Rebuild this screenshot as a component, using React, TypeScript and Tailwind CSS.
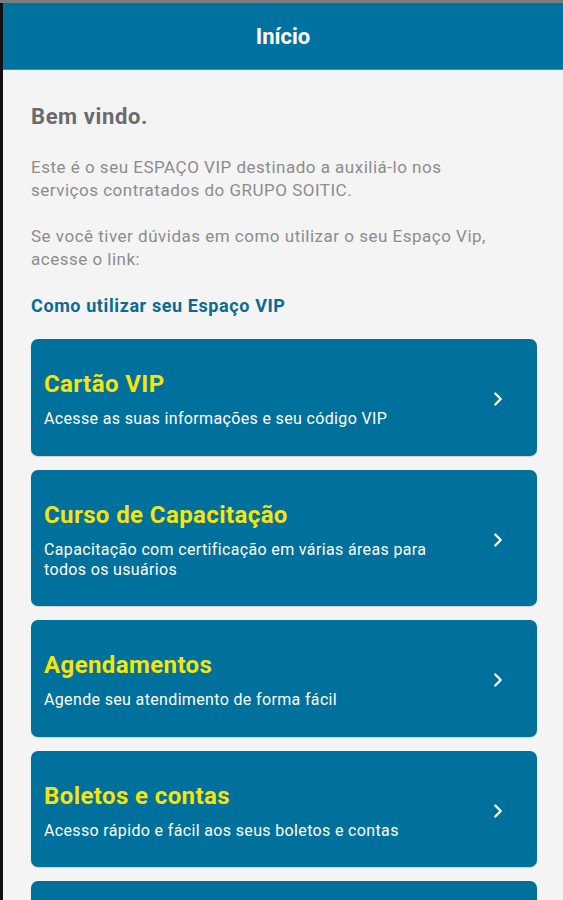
import { ChevronRight } from "lucide-react"

interface MenuCard {
  title: string
  description: string
}

const cards: MenuCard[] = [
  { title: "Cartão VIP", description: "Acesse as suas informações e seu código VIP" },
  {
    title: "Curso de Capacitação",
    description: "Capacitação com certificação em várias áreas para todos os usuários",
  },
  { title: "Agendamentos", description: "Agende seu atendimento de forma fácil" },
  { title: "Boletos e contas", description: "Acesso rápido e fácil aos seus boletos e contas" },
  { title: "Rede de parceiros", description: "Descontos exclusivos em estabelecimentos parceiros" },
]

export default function App() {
  return (
    <div
      className="h-[900px] overflow-hidden bg-[#7b7b7b] pt-[3px]"
      style={{ fontFamily: "Roboto, 'Liberation Sans', sans-serif" }}
    >
      <div className="flex h-full border-l-[3px] border-[#111111]">
        <div className="flex-1 bg-[#f4f4f4]">
          {/* Header */}
          <header className="flex h-[67px] items-center justify-center border-b border-[#3d8fb6] bg-[#0072a0]">
            <h1 className="text-[22px] font-bold text-white">Início</h1>
          </header>

          <main className="pl-[28px] pr-[26px] pt-[33px]">
            <h2 className="text-[22px] font-bold leading-[28px] tracking-[0.6px] text-[#6b6b6b]">
              Bem vindo.
            </h2>

            <p className="mt-[25px] w-[458px] text-[17px] leading-[23px] tracking-[0.5px] text-[#8c8c8c]">
              Este é o seu ESPAÇO VIP destinado a auxiliá-lo nos serviços contratados do GRUPO SOITIC.
            </p>
            <p className="mt-[23px] w-[458px] text-[17px] leading-[23px] tracking-[0.5px] text-[#8c8c8c]">
              Se você tiver dúvidas em como utilizar o seu Espaço Vip, acesse o link:
            </p>

            <a className="mt-[23px] block text-[18px] font-bold leading-[23px] tracking-[0.6px] text-[#0b6a94]">
              Como utilizar seu Espaço VIP
            </a>

            {/* Menu cards */}
            <div className="mt-[22px] flex flex-col gap-[14px]">
              {cards.map((card) => (
                <button
                  key={card.title}
                  className="flex items-center rounded-[7px] bg-[#00709c] pb-[26.5px] pl-[13px] pr-[28px] pt-[30px] text-left shadow-[0_1px_1px_rgba(0,0,0,0.15)]"
                >
                  <div className="flex-1 pr-[36px]">
                    <p className="text-[24px] font-bold leading-[30px] tracking-[0.4px] text-[#f6e40d]">
                      {card.title}
                    </p>
                    <p className="mt-[10px] text-[16px] leading-[20px] tracking-[0.35px] text-white">
                      {card.description}
                    </p>
                  </div>
                  <ChevronRight className="h-[22px] w-[22px] text-white" strokeWidth={2.5} />
                </button>
              ))}
            </div>
          </main>
        </div>
      </div>
    </div>
  )
}
